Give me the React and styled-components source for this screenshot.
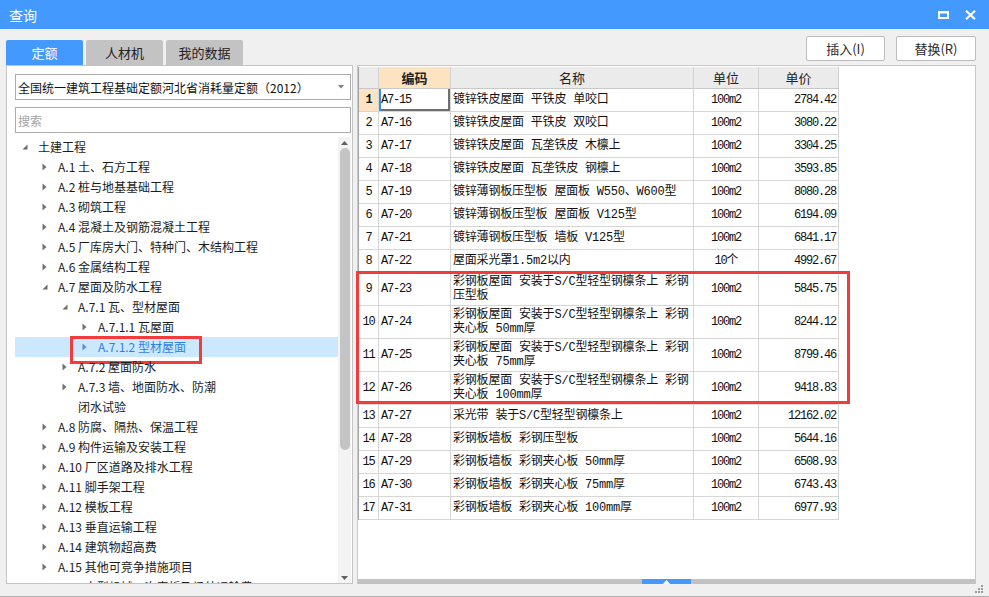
import React from "react";
import styled, { createGlobalStyle } from "styled-components";

const GlobalStyle = createGlobalStyle`
  html, body {
    margin: 0;
    padding: 0;
    background: #f0f0f0;
  }
  body {
    font-family: "Noto Sans CJK SC", "Noto Sans", sans-serif;
    color: #1e1e1e;
  }
  * {
    box-sizing: border-box;
  }
`;

const BLUE = "#4499ff";
const CJK = `"Noto Sans CJK SC", "Noto Sans", sans-serif`;
const MONO = `"Liberation Mono", "Noto Sans CJK SC", monospace`;

const Window = styled.div`
  width: 989px;
  height: 597px;
  display: flex;
  flex-direction: column;
  background: #f0f0f0;
  border-bottom: 1px solid #b0b0b0;
  overflow: hidden;
`;

const TitleBar = styled.div`
  flex: none;
  height: 29px;
  background: ${BLUE};
  color: #fff;
  display: flex;
  align-items: center;
  padding: 0 13px 0 9px;
`;

const Title = styled.div`
  flex: 1;
  font-family: ${CJK};
  font-size: 14px;
  line-height: 1;
`;

const TitleButtons = styled.div`
  display: flex;
  align-items: center;
  gap: 16px;
`;

const Toolbar = styled.div`
  flex: none;
  height: 36px;
  display: flex;
  padding: 0 13px 0 6px;
`;

const Tabs = styled.div`
  align-self: flex-end;
  display: flex;
  gap: 3px;
  flex: 1;
`;

const Tab = styled.div`
  width: 77px;
  height: 25px;
  border-radius: 2px 2px 0 0;
  background: ${(p) => (p.$active ? BLUE : "#c3c3c3")};
  color: ${(p) => (p.$active ? "#fff" : "#222")};
  font-family: ${CJK};
  font-size: 13px;
  display: flex;
  align-items: center;
  justify-content: center;
`;

const Actions = styled.div`
  display: flex;
  gap: 11px;
  margin-top: 7px;
  align-self: flex-start;
`;

const Button = styled.button`
  width: ${(p) => p.$w}px;
  height: 25px;
  background: #fff;
  border: 1px solid #bdbdbd;
  border-radius: 2px;
  font-family: ${CJK};
  font-size: 13px;
  color: #2a2a2a;
  padding: 0;
  cursor: pointer;
`;

const Body = styled.div`
  flex: none;
  height: 519px;
  display: flex;
  gap: 4px;
  padding: 0 13px 0 6px;
`;

const LeftPanel = styled.div`
  width: 347px;
  background: #fff;
  border: 1px solid #c4c4c4;
  padding: 8px 1px 0 8px;
  display: flex;
  flex-direction: column;
`;

const Select = styled.div`
  height: 26px;
  border: 1px solid #ababab;
  display: flex;
  align-items: center;
  padding: 0 6px 0 2px;
  font-family: ${CJK};
  font-size: 12px;
  color: #111;
  margin-bottom: 7px;
  span {
    flex: 1;
  }
`;

const Search = styled.div`
  height: 26px;
  border: 1px solid #ababab;
  display: flex;
  align-items: center;
  padding-left: 2px;
  font-family: ${CJK};
  font-size: 12px;
  color: #a3a3a3;
  margin-bottom: 4px;
`;

const Tree = styled.div`
  flex: 1;
  display: flex;
  min-height: 0;
`;

const TreeList = styled.div`
  flex: 1;
  overflow: hidden;
`;

const TreeRow = styled.div`
  position: relative;
  display: flex;
  align-items: flex-start;
  padding-left: ${(p) => 5 + p.$level * 20}px;
  background: ${(p) => (p.$selected ? "#cce8ff" : "transparent")};
  color: ${(p) => (p.$selected ? "#2f80e4" : "#1c1c1c")};
  font-family: ${CJK};
  font-size: 12px;
  line-height: 20px;
`;

const Toggle = styled.span`
  flex: none;
  width: 18px;
  height: 20px;
  display: flex;
  align-items: center;
  padding-left: 2px;
`;

const TreeText = styled.span`
  white-space: pre;
`;

const Mark = styled.div`
  position: absolute;
  left: 55px;
  top: -1px;
  width: 132px;
  height: 28px;
  border: 3px solid #f23b3b;
  pointer-events: none;
`;

const Scrollbar = styled.div`
  flex: none;
  width: 13px;
  background: #f3f3f3;
  display: flex;
  flex-direction: column;
  align-items: center;
`;

const ScrollArrow = styled.div`
  height: 11px;
  display: flex;
  align-items: center;
  justify-content: center;
  margin-top: ${(p) => (p.$down ? "auto" : "0")};
`;

const Thumb = styled.div`
  width: 10px;
  height: 302px;
  border-radius: 5px;
  background: #c4c4c4;
`;

const RightPanel = styled.div`
  flex: 1;
  background: #fff;
  border: 1px solid #c9c9c9;
  border-bottom: none;
  padding-top: 1px;
  display: flex;
  flex-direction: column;
`;

const Grid = styled.div`
  position: relative;
  width: 481px;
  border-left: 1px solid #a3a3a3;
`;

const Row = styled.div`
  display: grid;
  grid-template-columns: 20px 72px 243px 65px 80px;
  height: ${(p) => p.$h}px;
`;

const Cell = styled.div`
  border-right: 1px solid #d6d6d6;
  border-bottom: 1px solid #d6d6d6;
  display: flex;
  align-items: center;
  justify-content: ${(p) => p.$align || "flex-start"};
  padding: ${(p) => p.$pad || "0 2px"};
  overflow: hidden;
  white-space: pre;
  font-family: ${MONO};
  font-size: 12px;
  letter-spacing: ${(p) => (p.$mono ? "-1.2px" : "-0.2px")};
  line-height: 14px;
  color: #111;
  background: ${(p) => (p.$hl ? "#fee4c4" : "#fff")};
  font-weight: ${(p) => (p.$hl ? 700 : 400)};
  box-shadow: ${(p) =>
    p.$focus ? "inset 2px 0 0 #3f8ee6, inset -2px -2px 0 #6f6f6f" : "none"};
`;

const HeadCell = styled.div`
  border-right: 1px solid #d0d0d0;
  border-bottom: 1px solid #c8c8c8;
  background: ${(p) => (p.$hl ? "#fee3c1" : "#ebebeb")};
  font-weight: ${(p) => (p.$hl ? 700 : 400)};
  font-family: ${CJK};
  font-size: 13px;
  color: #222;
  display: flex;
  align-items: center;
  justify-content: center;
`;

const Frame = styled.div`
  position: absolute;
  left: -3px;
  top: 204px;
  width: 494px;
  height: 133px;
  border: 3px solid #f23b3b;
  pointer-events: none;
`;

const Splitter = styled.div`
  margin-top: auto;
  height: 5px;
  background: #c2c2c2;
  display: flex;
  justify-content: center;
`;

const Handle = styled.div`
  width: 49px;
  background: ${BLUE};
  display: flex;
  align-items: center;
  justify-content: center;
`;

const Footer = styled.div`
  flex: 1;
  display: flex;
  justify-content: flex-end;
  padding: 1px 5px 0 0;
`;

const tree = [
  { level: 0, text: "土建工程", open: true },
  { level: 1, text: "A.1 土、石方工程" },
  { level: 1, text: "A.2 桩与地基基础工程" },
  { level: 1, text: "A.3 砌筑工程" },
  { level: 1, text: "A.4 混凝土及钢筋混凝土工程" },
  { level: 1, text: "A.5 厂库房大门、特种门、木结构工程" },
  { level: 1, text: "A.6 金属结构工程" },
  { level: 1, text: "A.7 屋面及防水工程", open: true },
  { level: 2, text: "A.7.1 瓦、型材屋面", open: true },
  { level: 3, text: "A.7.1.1 瓦屋面" },
  { level: 3, text: "A.7.1.2 型材屋面", selected: true },
  { level: 2, text: "A.7.2 屋面防水" },
  { level: 2, text: "A.7.3 墙、地面防水、防潮\n闭水试验" },
  { level: 1, text: "A.8 防腐、隔热、保温工程" },
  { level: 1, text: "A.9 构件运输及安装工程" },
  { level: 1, text: "A.10 厂区道路及排水工程" },
  { level: 1, text: "A.11 脚手架工程" },
  { level: 1, text: "A.12 模板工程" },
  { level: 1, text: "A.13 垂直运输工程" },
  { level: 1, text: "A.14 建筑物超高费" },
  { level: 1, text: "A.15 其他可竞争措施项目" },
  { level: 1, text: "A.16 大型机械一次安拆及场外运输费" },
];

const LONG = "彩钢板屋面 安装于S/C型轻型钢檩条上 彩钢\n";

const rows = [
  ["A7-15", "镀锌铁皮屋面 平铁皮 单咬口", "100m2", "2784.42"],
  ["A7-16", "镀锌铁皮屋面 平铁皮 双咬口", "100m2", "3080.22"],
  ["A7-17", "镀锌铁皮屋面 瓦垄铁皮 木檩上", "100m2", "3304.25"],
  ["A7-18", "镀锌铁皮屋面 瓦垄铁皮 钢檩上", "100m2", "3593.85"],
  ["A7-19", "镀锌薄钢板压型板 屋面板 W550、W600型", "100m2", "8080.28"],
  ["A7-20", "镀锌薄钢板压型板 屋面板 V125型", "100m2", "6194.09"],
  ["A7-21", "镀锌薄钢板压型板 墙板 V125型", "100m2", "6841.17"],
  ["A7-22", "屋面采光罩1.5m2以内", "10个", "4992.67"],
  ["A7-23", LONG + "压型板", "100m2", "5845.75"],
  ["A7-24", LONG + "夹心板 50mm厚", "100m2", "8244.12"],
  ["A7-25", LONG + "夹心板 75mm厚", "100m2", "8799.46"],
  ["A7-26", LONG + "夹心板 100mm厚", "100m2", "9418.83"],
  ["A7-27", "采光带 装于S/C型轻型钢檩条上", "100m2", "12162.02"],
  ["A7-28", "彩钢板墙板 彩钢压型板", "100m2", "5644.16"],
  ["A7-29", "彩钢板墙板 彩钢夹心板 50mm厚", "100m2", "6508.93"],
  ["A7-30", "彩钢板墙板 彩钢夹心板 75mm厚", "100m2", "6743.43"],
  ["A7-31", "彩钢板墙板 彩钢夹心板 100mm厚", "100m2", "6977.93"],
];

const Caret = ({ open, color }) =>
  open ? (
    <svg width="6" height="6" viewBox="0 0 6 6">
      <polygon points="5.5,0.5 5.5,5.5 0.5,5.5" fill="#6a6a6a" />
    </svg>
  ) : (
    <svg width="5" height="8" viewBox="0 0 5 8">
      <polygon points="0.5,0.5 4.5,4 0.5,7.5" fill={color || "#707070"} />
    </svg>
  );

const App = () => {
  return (
    <>
      <GlobalStyle />
      <Window>
        <TitleBar>
          <Title>查询</Title>
          <TitleButtons>
            <svg width="11" height="8" viewBox="0 0 11 8">
              <rect x="1" y="1" width="9" height="6" fill="none" stroke="#fff" strokeWidth="2" />
              <rect x="0" y="0" width="11" height="2.5" fill="#fff" />
            </svg>
            <svg width="11" height="10" viewBox="0 0 11 10">
              <path d="M1 0.8 L10 9.2 M10 0.8 L1 9.2" stroke="#fff" strokeWidth="2.2" />
            </svg>
          </TitleButtons>
        </TitleBar>

        <Toolbar>
          <Tabs>
            <Tab $active>定额</Tab>
            <Tab>人材机</Tab>
            <Tab>我的数据</Tab>
          </Tabs>
          <Actions>
            <Button $w={79}>插入(I)</Button>
            <Button $w={80}>替换(R)</Button>
          </Actions>
        </Toolbar>

        <Body>
          <LeftPanel>
            <Select>
              <span>全国统一建筑工程基础定额河北省消耗量定额（2012）</span>
              <svg width="6" height="4" viewBox="0 0 6 4">
                <polygon points="0,0 6,0 3,3.5" fill="#808080" />
              </svg>
            </Select>
            <Search>搜索</Search>
            <Tree>
              <TreeList>
                {tree.map((n, i) => (
                  <TreeRow key={i} $level={n.level} $selected={n.selected}>
                    <Toggle>
                      <Caret open={n.open} color={n.selected ? "#4a90e2" : null} />
                    </Toggle>
                    <TreeText>{n.text}</TreeText>
                    {n.selected && <Mark />}
                  </TreeRow>
                ))}
              </TreeList>
              <Scrollbar>
                <ScrollArrow>
                  <svg width="7" height="4" viewBox="0 0 7 4">
                    <polygon points="3.5,0 7,4 0,4" fill="#606060" />
                  </svg>
                </ScrollArrow>
                <Thumb />
                <ScrollArrow $down>
                  <svg width="7" height="4" viewBox="0 0 7 4">
                    <polygon points="0,0 7,0 3.5,4" fill="#606060" />
                  </svg>
                </ScrollArrow>
              </Scrollbar>
            </Tree>
          </LeftPanel>

          <RightPanel>
            <Grid>
              <Row $h={22}>
                <HeadCell />
                <HeadCell $hl>编码</HeadCell>
                <HeadCell>名称</HeadCell>
                <HeadCell>单位</HeadCell>
                <HeadCell>单价</HeadCell>
              </Row>
              {rows.map((r, i) => {
                const tall = r[1].includes("\n");
                return (
                  <Row key={r[0]} $h={tall ? 33 : 23}>
                    <Cell $mono $align="center" $pad="0" $hl={i === 0}>
                      {i + 1}
                    </Cell>
                    <Cell $mono $focus={i === 0}>
                      {r[0]}
                    </Cell>
                    <Cell>{r[1]}</Cell>
                    <Cell $mono $align="center">
                      {r[2]}
                    </Cell>
                    <Cell $mono $align="flex-end" $pad="0 2px 0 0">
                      {r[3]}
                    </Cell>
                  </Row>
                );
              })}
              <Frame />
            </Grid>
            <Splitter>
              <Handle>
                <svg width="7" height="4" viewBox="0 0 7 4">
                  <polygon points="3.5,0 7,4 0,4" fill="#fff" />
                </svg>
              </Handle>
            </Splitter>
          </RightPanel>
        </Body>

        <Footer>
          <svg width="9" height="9" viewBox="0 0 9 9">
            {[
              [6, 0],
              [3, 3],
              [6, 3],
              [0, 6],
              [3, 6],
              [6, 6],
            ].map(([x, y]) => (
              <rect key={`${x}-${y}`} x={x} y={y} width="2" height="2" fill="#9c9c9c" />
            ))}
          </svg>
        </Footer>
      </Window>
    </>
  );
};

export default App;
